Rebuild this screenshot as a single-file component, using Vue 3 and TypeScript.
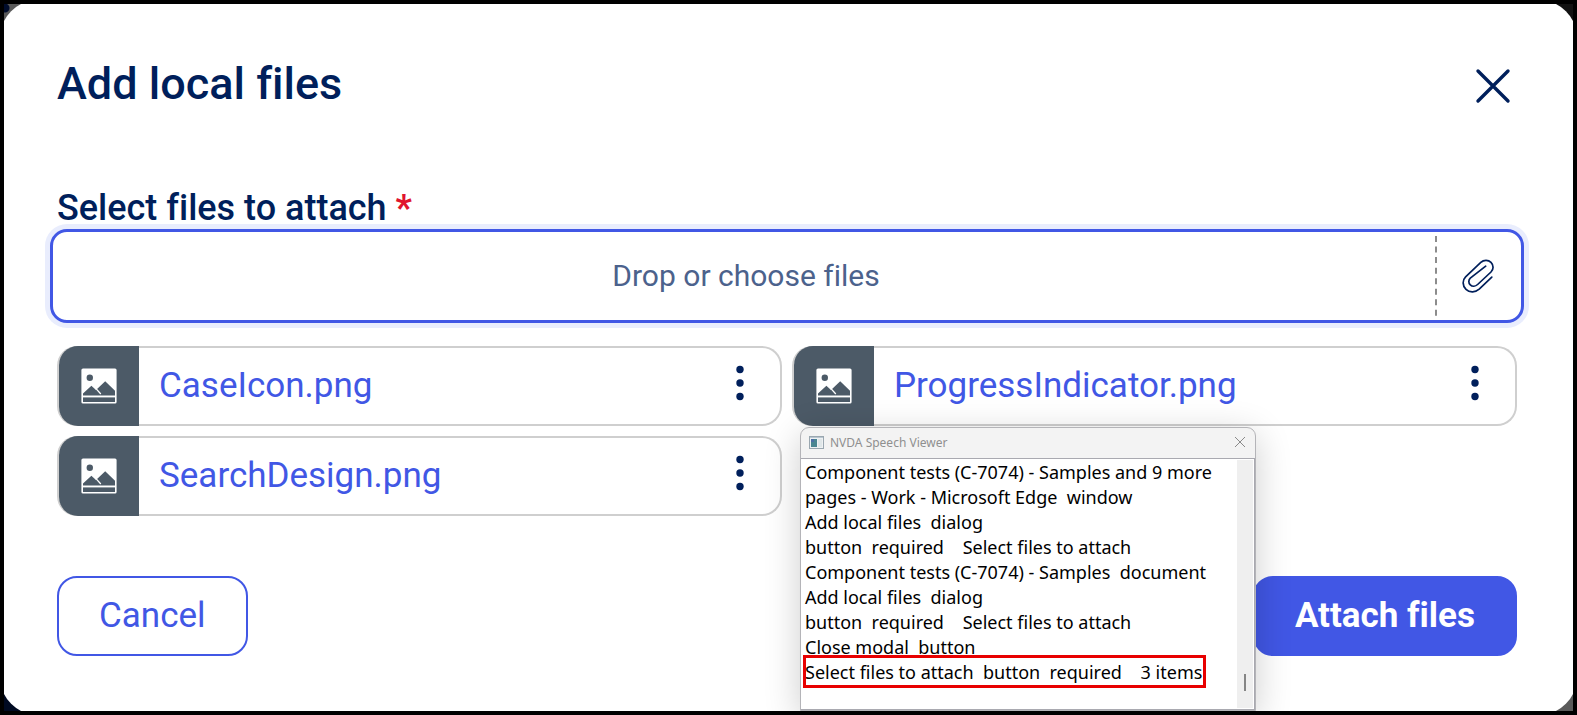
<script setup lang="ts">
import { ref } from 'vue'

interface Attachment {
  id: number
  name: string
}

interface SpeechLine {
  text: string
  marked?: boolean
}

const attachments = ref<Attachment[]>([
  { id: 1, name: 'CaseIcon.png' },
  { id: 2, name: 'ProgressIndicator.png' },
  { id: 3, name: 'SearchDesign.png' },
])

const speech: SpeechLine[] = [
  { text: 'Component tests (C-7074) - Samples and 9 more' },
  { text: 'pages - Work - Microsoft Edge  window' },
  { text: 'Add local files  dialog' },
  { text: 'button  required    Select files to attach' },
  { text: 'Component tests (C-7074) - Samples  document' },
  { text: 'Add local files  dialog' },
  { text: 'button  required    Select files to attach' },
  { text: 'Close modal  button' },
  { text: 'Select files to attach  button  required    3 items', marked: true },
]
</script>

<template>
  <div class="frame">
    <div class="stage">
      <main class="modal" role="dialog" aria-labelledby="modal-title">
        <header class="modal-header">
          <h1 id="modal-title">Add local files</h1>
          <button class="close" type="button" aria-label="Close modal">
            <svg viewBox="0 0 36 36" width="36" height="36" aria-hidden="true">
              <path d="M3 3 33 33M33 3 3 33" fill="none" stroke="currentColor" stroke-width="3.4" stroke-linecap="round" />
            </svg>
          </button>
        </header>

        <div id="files-label" class="label">Select files to attach <span class="required">*</span></div>
        <button class="dropzone" type="button" aria-labelledby="files-label">
          <span class="dropzone-text">Drop or choose files</span>
          <svg class="divider" viewBox="0 0 2 80" width="2" height="80" aria-hidden="true">
            <path d="M1 0V80" stroke="#8c8c8c" stroke-width="2" stroke-dasharray="6 4.55" />
          </svg>
          <span class="clip">
            <svg viewBox="0 0 34 36" width="34" height="36" aria-hidden="true">
              <path
                d="M30.8 19.2 18.2 31.1C14.5 34.4 8.7 34.9 5 31.3C1.2 27.6 1.3 22 4.6 18.8L19.8 4.4C22.8 1.7 27.2 1.6 30 4.3C32.8 7.2 32.7 11.4 30 14L16.6 26.5C14.4 28.5 11.3 28.7 9.3 26.8C7.3 24.9 7.4 21.9 9.3 20.1L24.7 8.2"
                fill="none" stroke="currentColor" stroke-width="1.7" stroke-linecap="round" />
            </svg>
          </span>
        </button>

        <ul class="files">
          <li v-for="file in attachments" :key="file.id" class="file">
            <span class="thumb">
              <svg viewBox="0 0 36 36" width="36" height="36" aria-hidden="true">
                <rect x=".4" y=".4" width="35.2" height="35.2" rx="1.6" fill="#fff" />
                <circle cx="8.8" cy="9.7" r="3.2" fill="#4c5a67" />
                <path d="M2 27.6V25.4L10.4 17.8L15 22.1L24.2 13.2L34 22.8V27.6Z" fill="#4c5a67" />
                <path d="M15 20.6 19.8 26" stroke="#fff" stroke-width="1.3" />
                <path d="M2 29.4H34V34H2Z" fill="#4c5a67" />
              </svg>
            </span>
            <a class="file-name" href="#">{{ file.name }}</a>
            <button class="more" type="button" :aria-label="`Actions for ${file.name}`">
              <svg viewBox="0 0 8 36" width="8" height="36" fill="currentColor" aria-hidden="true">
                <circle cx="4" cy="4.5" r="3.7" />
                <circle cx="4" cy="18" r="3.7" />
                <circle cx="4" cy="31.5" r="3.7" />
              </svg>
            </button>
          </li>
        </ul>

        <footer class="actions">
          <button class="btn btn-secondary" type="button">Cancel</button>
          <button class="btn btn-primary" type="button">Attach files</button>
        </footer>
      </main>

      <section class="viewer" aria-labelledby="viewer-title">
        <header class="viewer-bar">
          <svg viewBox="0 0 15 13" width="15" height="13" aria-hidden="true">
            <rect x=".5" y=".5" width="14" height="12" fill="#eef1f3" stroke="#9aa7b0" />
            <path d="M1 1H14V2H1Z" fill="#b9c6d0" />
            <path d="M2 3H8V11H2Z" fill="#4a8691" />
            <path d="M2 3H5V6H2Z" fill="#4c6fa5" />
            <path d="M9 3H13V11H9Z" fill="#dfe6e8" />
          </svg>
          <h2 id="viewer-title">NVDA Speech Viewer</h2>
          <button class="viewer-close" type="button" aria-label="Close viewer">
            <svg viewBox="0 0 12 12" width="12" height="12" aria-hidden="true">
              <path d="M1 1 11 11M11 1 1 11" stroke="#8a8a8a" stroke-width="1" />
            </svg>
          </button>
        </header>
        <div class="viewer-body">
          <div class="log" role="log">
            <p v-for="(line, i) in speech" :key="i" :class="{ marked: line.marked }">{{ line.text }}</p>
          </div>
          <div class="scrollbar"><span class="scroll-thumb"></span></div>
        </div>
      </section>
    </div>
  </div>
</template>

<style>
body {
  margin: 0;
  background: #000;
}
</style>

<style scoped>
.frame {
  box-sizing: border-box;
  min-height: 100vh;
  padding: 4px;
  display: flex;
  background: #000;
  font-family: Roboto, "Liberation Sans", sans-serif;
  font-variant-ligatures: none;
  color: #001f5b;
}

.stage {
  position: relative;
  flex: 1;
  display: flex;
  overflow: hidden;
  background:
    radial-gradient(circle at 1px 4px, #000c2b 4px, transparent 5px),
    linear-gradient(#5a5a5a, #5a5a5a) left top / 40px 40px no-repeat,
    linear-gradient(#121212, #121212) right top / 40px 40px no-repeat,
    linear-gradient(#000a22, #000a22) left bottom / 40px 40px no-repeat,
    linear-gradient(#5a5a5a, #5a5a5a) right bottom / 40px 40px no-repeat;
}

.modal {
  flex: 1;
  margin: -4px;
  padding: 60px 60px 59px 57px;
  border-radius: 38px;
  background: #fff;
}

.modal-header {
  display: flex;
  align-items: flex-start;
  justify-content: space-between;
  padding-right: 6px;
}

h1 {
  margin: 0;
  font-size: 45px;
  line-height: 48px;
  font-weight: 500;
}

button {
  font-family: inherit;
  font-variant-ligatures: inherit;
  color: inherit;
  cursor: pointer;
}

.close,
.more,
.viewer-close {
  display: flex;
  padding: 0;
  border: 0;
  background: none;
}

.close {
  margin-top: 8px;
}

.label {
  margin-top: 79px;
  font-size: 36px;
  line-height: 42px;
  font-weight: 500;
}

.required {
  font-weight: 700;
  color: #e0142d;
}

.dropzone {
  box-sizing: border-box;
  display: flex;
  align-items: center;
  width: calc(100% + 14px);
  height: 94px;
  margin: 0 -7px;
  padding: 0;
  border: 3px solid #4157e5;
  border-radius: 17px;
  background: #fff;
  box-shadow: 0 0 0 5px #e9edfd;
}

.dropzone-text {
  flex: 1;
  padding: 0 0 2px 4px;
  font-size: 30px;
  text-align: center;
  color: #4c628c;
}

.clip {
  display: flex;
  justify-content: center;
  width: 84px;
  box-sizing: border-box;
  padding-right: 2px;
}

.files {
  display: grid;
  grid-template-columns: 1fr 1fr;
  gap: 10px;
  margin: 23px 0 0;
  padding: 0;
  list-style: none;
}

.file {
  box-sizing: border-box;
  display: flex;
  align-items: center;
  height: 80px;
  padding-right: 38px;
  border-radius: 20px;
  box-shadow: inset 0 0 0 2px #cfcfcf;
}

.thumb {
  box-sizing: border-box;
  align-self: stretch;
  display: flex;
  align-items: center;
  justify-content: center;
  width: 80px;
  margin-left: 2px;
  border-radius: 19px 0 0 19px;
  background: #4c5a67;
}

.file-name {
  flex: 1;
  margin-left: 20px;
  font-size: 35px;
  line-height: 42px;
  color: #4157e5;
  text-decoration: none;
}

.more {
  margin-bottom: 6px;
}

.actions {
  display: flex;
  justify-content: space-between;
  margin-top: 60px;
}

.btn {
  box-sizing: border-box;
  height: 80px;
  padding: 0 40px 2px;
  border: 2px solid #4157e5;
  border-radius: 20px;
  font-size: 35px;
}

.btn-secondary {
  background: #fff;
  color: #4157e5;
}

.btn-primary {
  background: #4157e5;
  color: #fff;
  font-weight: 700;
}

.viewer {
  position: absolute;
  right: 317px;
  bottom: 0;
  box-sizing: border-box;
  width: 456px;
  border: 1px solid #b4b4b8;
  border-radius: 9px 9px 0 0;
  background: #f3f3f3;
  box-shadow: 0 8px 36px rgba(0, 0, 0, 0.2);
  font-family: "Noto Sans", "Open Sans", sans-serif;
}

.viewer-bar {
  box-sizing: border-box;
  display: flex;
  align-items: center;
  height: 30px;
  padding: 0 9px 2px 8px;
  gap: 6px;
}

h2 {
  flex: 1;
  margin: 0;
  font-size: 12px;
  font-weight: 400;
  color: #8f8f8f;
}

.viewer-body {
  display: flex;
  border: 1px solid #a9a9b0;
  border-width: 1px 1px 1px 0;
  background: #fff;
}

.log {
  flex: 1;
  padding: 1px 0 24px 4px;
  color: #000;
}

p {
  margin: 0;
  font-size: 18px;
  line-height: 25px;
  white-space: pre;
}

.marked {
  position: relative;
  width: fit-content;
}

.marked::after {
  content: "";
  position: absolute;
  inset: -5px -4px -3px -2px;
  border: 3px solid #e80000;
}

.scrollbar {
  display: flex;
  align-items: flex-end;
  justify-content: center;
  width: 16px;
  margin: 1px;
  background: #efefef;
}

.scroll-thumb {
  width: 2px;
  height: 17px;
  margin-bottom: 17px;
  background: #858585;
}
</style>
